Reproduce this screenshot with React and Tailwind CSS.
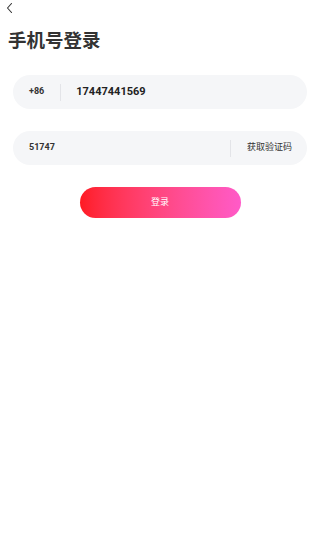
import React from 'react';

const App = () => {
    return (
        <div className="min-h-[557px] w-[320px] bg-white font-['Roboto','Noto_Sans_CJK_SC',sans-serif] text-[#333]">
            {/* Back */}
            <div className="h-[16px] pl-[5px] pt-[2px]">
                <svg width="10" height="12" viewBox="0 0 10 12" fill="none">
                    <path d="M6.5 1.5L2.5 6l4 4.5" stroke="#333" strokeWidth="1.1" strokeLinecap="round" strokeLinejoin="round" />
                </svg>
            </div>

            <h1 className="ml-[8px] mt-[13px] text-[18.5px] leading-[25px] font-semibold text-[#333]">手机号登录</h1>

            <div className="mx-[13px] mt-[21px] flex h-[34px] items-center rounded-full bg-[#f5f6f8] pl-[16px]">
                <span className="text-[9px] font-bold text-[#333]">+86</span>
                <span className="ml-[16px] h-[17px] w-px bg-[#e3e4e8]" />
                <span className="ml-[15px] text-[11px] font-bold text-[#222]">17447441569</span>
            </div>

            <div className="mx-[13px] mt-[22px] flex h-[34px] items-center rounded-full bg-[#f5f6f8] pl-[16px] pr-[15px]">
                <span className="flex-1 text-[9px] font-bold text-[#333]">51747</span>
                <span className="h-[17px] w-px bg-[#e3e4e8]" />
                <span className="ml-[16px] text-[9px] text-[#333]">获取验证码</span>
            </div>

            <div className="mt-[22px] flex justify-center">
                <button className="flex h-[31px] w-[161px] items-center justify-center rounded-full bg-gradient-to-r from-[#ff1a22] to-[#ff5ac8] text-[9px] text-white">
                    登录
                </button>
            </div>
        </div>
    );
};

export default App;
